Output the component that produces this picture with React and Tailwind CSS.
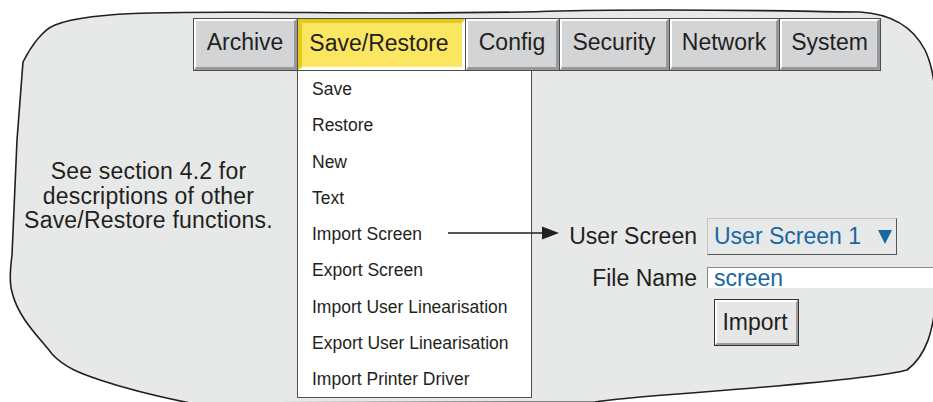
const TABS = [
  { label: "Archive", w: "w-[104px]" },
  { label: "Save/Restore", w: "w-[168px]", active: true },
  { label: "Config", w: "w-[94px]" },
  { label: "Security", w: "w-[110px]" },
  { label: "Network", w: "w-[110px]" },
  { label: "System", w: "w-[100px]", last: true },
];

const MENU = [
  "Save",
  "Restore",
  "New",
  "Text",
  "Import Screen",
  "Export Screen",
  "Import User Linearisation",
  "Export User Linearisation",
  "Import Printer Driver",
];

function Tab({ label, w, active, last }) {
  return (
    <div className={`${w} h-full flex ${last ? "" : "border-r border-[#4d4d4d]"}`}>
      {active ? (
        <div className="flex-1 flex items-center justify-center pb-1 pr-[6px] bg-[#fae661] border-t-[4px] border-l-[4px] border-t-[#e6cb1c] border-l-[#e6cb1c] border-b-[3px] border-r-[3px] border-b-white border-r-white">
          {label}
        </div>
      ) : (
        <div className="flex-1 flex items-center justify-center pb-[3px] bg-[#d3d4d6] border-t-2 border-l-2 border-t-white border-l-white border-b-[3px] border-r-[3px] border-b-[#98999b] border-r-[#98999b]">
          {label}
        </div>
      )}
    </div>
  );
}

function Blob() {
  return (
    <svg className="absolute inset-0" width="933" height="402" viewBox="0 0 933 402">
      <path
        d="M 23 62 C 30 48, 42 30, 55 25 C 75 17, 105 14, 150 13 C 250 10, 400 16, 560 11 C 700 8, 820 12, 860 12 C 893 14, 913 27, 925 50 C 931 62, 934 75, 936 100 L 936 300 C 933 330, 927 355, 907 370 C 880 378, 760 388, 640 397 C 620 399, 605 400, 595 402 L 190 403 C 165 398, 130 390, 100 380 C 82 374, 65 368, 52 354 C 40 338, 18 318, 12 292 C 9 282, 10 270, 12 255 L 17 140 L 23 62 Z"
        fill="#e7e8e8"
        stroke="#231f20"
        strokeWidth="1.6"
      />
    </svg>
  );
}

function Arrow() {
  return (
    <svg className="absolute left-[150px] top-[9px]" width="112" height="16" viewBox="0 0 112 16">
      <line x1="0" y1="8" x2="96" y2="8" stroke="#231f20" strokeWidth="1.6" />
      <polygon points="94,1.5 111,8 94,14.5" fill="#231f20" />
    </svg>
  );
}

export default function App() {
  return (
    <div className="relative w-[933px] h-[402px] bg-white overflow-hidden text-[#231f20] font-['Liberation_Sans',Arial,sans-serif]">
      <Blob />
      <div className="relative flex flex-col">
        <div className="mt-[18px] ml-[193px] w-[688px] h-[53px] flex border border-[#4d4d4d] text-[23px]">
          {TABS.map((t) => (
            <Tab key={t.label} {...t} />
          ))}
        </div>

        <div className="flex">
          <div className="w-[297px] shrink-0 pt-[88px] text-center text-[23px] leading-[24.5px] tracking-[0.2px]">
            <p>See section 4.2 for</p>
            <p>descriptions of other</p>
            <p>Save/Restore functions.</p>
          </div>

          <div className="w-[235px] shrink-0 h-[327px] bg-white border-l border-r border-b border-[#4d4d4d] text-[17.5px]">
            {MENU.map((item) => (
              <div key={item} className="relative h-[36.25px] flex items-center pl-[14px]">
                {item}
                {item === "Import Screen" && <Arrow />}
              </div>
            ))}
          </div>

          <div className="w-[401px] shrink-0 pt-[147px]">
            <div className="grid grid-cols-[165px_226px] gap-x-[10px] text-[23px]">
              <div className="h-[37px] flex items-center justify-end">User Screen</div>
              <div className="w-[190px] h-[37px] flex items-center justify-between pl-[6px] pr-[4px] text-[#1767a3] border-t border-l border-[#c4c4c4] border-b border-r border-b-[#555] border-r-[#555]">
                <span>User Screen 1</span>
                <svg width="14" height="16" viewBox="0 0 14 16">
                  <polygon points="0,1 14,1 7,15" fill="#1767a3" />
                </svg>
              </div>

              <div className="mt-[12px] h-[21px] leading-[21px] pt-[1px] text-right">File Name</div>
              <div className="mt-[12px] h-[21px] leading-[21px] w-[240px] bg-white border-t border-l border-[#8a8a8a] pl-[6px] text-[#1767a3]">
                screen
              </div>

              <div />
              <div className="mt-[11px] ml-[7px]">
                <div className="w-[85px] h-[47px] flex border border-[#333]">
                  <div className="flex-1 flex items-center justify-center pr-[3px] bg-[#e6e6e6] border-t-2 border-l-2 border-t-white border-l-white border-b-2 border-r-2 border-b-[#9b9b9b] border-r-[#9b9b9b]">
                    Import
                  </div>
                </div>
              </div>
            </div>
          </div>
        </div>
      </div>
    </div>
  );
}
